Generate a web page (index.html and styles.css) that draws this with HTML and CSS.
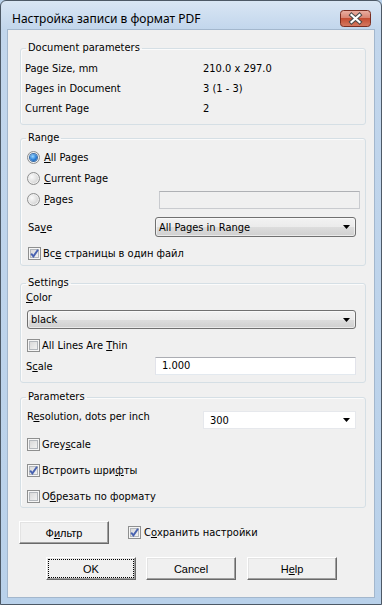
FILE: index.html
```html
<!DOCTYPE html>
<html>
<head>
<meta charset="utf-8">
<title>Настройка записи в формат PDF</title>
<link rel="stylesheet" href="styles.css">
</head>
<body>
<div class="window">

	<div class="titlebar">
		<span class="title">Настройка записи в формат PDF</span>
		<svg class="close" width="31" height="17" viewBox="0 0 31 17">
			<defs>
				<linearGradient id="closeGrad" x1="0" y1="0" x2="0" y2="1">
					<stop offset="0" stop-color="#eab0a4"/>
					<stop offset="0.45" stop-color="#d98573"/>
					<stop offset="0.5" stop-color="#c44d33"/>
					<stop offset="1" stop-color="#d57b63"/>
				</linearGradient>
			</defs>
			<rect x="0.5" y="0.5" width="30" height="16" rx="3" fill="url(#closeGrad)" stroke="#7a2e22"/>
			<path d="M11.5 5 L19.5 12 M19.5 5 L11.5 12" stroke="#4a4a4a" stroke-width="4.2" stroke-linecap="square"/>
			<path d="M11.5 5 L19.5 12 M19.5 5 L11.5 12" stroke="#ffffff" stroke-width="2.2" stroke-linecap="square"/>
		</svg>
	</div>

	<div class="client">

		<!-- document info -->
		<fieldset class="group group-doc">
			<legend>Document parameters</legend>
			<div class="info-row"><span>Page Size, mm</span><span>210.0 x 297.0</span></div>
			<div class="info-row"><span>Pages in Document</span><span>3 (1 - 3)</span></div>
			<div class="info-row"><span>Current Page</span><span>2</span></div>
		</fieldset>

		<!-- range -->
		<fieldset class="group group-range">
			<legend>Range</legend>
			<div class="radio-row"><span class="rb checked"><span class="dot"></span></span><span><u>A</u>ll Pages</span></div>
			<div class="radio-row"><span class="rb"></span><span><u>C</u>urrent Page</span></div>
			<div class="radio-row pages-row">
				<div class="radio-cell"><span class="rb"></span><span><u>P</u>ages</span></div>
				<div class="textbox disabled"></div>
			</div>
			<div class="field-row save-row">
				<span class="field-label">Sa<u>v</u>e</span>
				<div class="combo"><span>All Pages in Range</span><svg class="arrow" width="7" height="4" viewBox="0 0 7 4"><path d="M0 0H7L3.5 4Z"/></svg></div>
			</div>
			<div class="check-row one-file"><span class="cb"><svg width="11" height="11" viewBox="0 0 11 11"><path d="M2.2 5.6 L4.4 8.4 L9 1.8" fill="none" stroke="#4862b0" stroke-width="1.9"/></svg></span><span>Вс<u>е</u> страницы в один файл</span></div>
		</fieldset>

		<!-- settings -->
		<fieldset class="group group-settings">
			<legend>Settings</legend>
			<div class="color-label"><u>C</u>olor</div>
			<div class="combo wide"><span>black</span><svg class="arrow" width="7" height="4" viewBox="0 0 7 4"><path d="M0 0H7L3.5 4Z"/></svg></div>
			<div class="check-row thin-row"><span class="cb"></span><span>All Lines Are <u>T</u>hin</span></div>
			<div class="field-row scale-row">
				<span class="field-label">S<u>c</u>ale</span>
				<div class="textbox">1.000</div>
			</div>
		</fieldset>

		<!-- parameters -->
		<fieldset class="group group-params">
			<legend>Parameters</legend>
			<div class="res-row">
				<span class="res-label">R<u>e</u>solution, dots per inch</span>
				<div class="combo edit"><span>300</span><svg class="arrow" width="7" height="4" viewBox="0 0 7 4"><path d="M0 0H7L3.5 4Z"/></svg></div>
			</div>
			<div class="check-row param-check first"><span class="cb"></span><span>Grey<u>s</u>cale</span></div>
			<div class="check-row param-check"><span class="cb"><svg width="11" height="11" viewBox="0 0 11 11"><path d="M2.2 5.6 L4.4 8.4 L9 1.8" fill="none" stroke="#4862b0" stroke-width="1.9"/></svg></span><span>Встроить шри<u>ф</u>ты</span></div>
			<div class="check-row param-check"><span class="cb"></span><span>О<u>б</u>резать по формату</span></div>
		</fieldset>

		<div class="filter-row">
			<div class="btn">Ф<u>и</u>льтр</div>
			<div class="check-row save-check"><span class="cb"><svg width="11" height="11" viewBox="0 0 11 11"><path d="M2.2 5.6 L4.4 8.4 L9 1.8" fill="none" stroke="#4862b0" stroke-width="1.9"/></svg></span><span>С<u>о</u>хранить настройки</span></div>
		</div>

		<div class="button-row">
			<div class="btn default">OK</div>
			<div class="btn">Cancel</div>
			<div class="btn help">H<u>e</u>lp</div>
		</div>

	</div>
</div>
</body>
</html>
```
FILE: styles.css
```css
*{
	box-sizing: border-box;
}
html, body{
	margin:0;
	padding:0;
}
body{
	font-family: "DejaVu Sans Condensed", "DejaVu Sans", sans-serif;
	font-size: 11px;
	color: #000;
	background: #b9d1ea;
}
u{
	text-decoration-thickness: 1px;
	text-underline-offset: 1px;
}

/* window frame */
.window{
	width: 382px;
	height: 605px;
	border: 1px solid #4d5966;
	border-radius: 6px 6px 0 0;
	background: linear-gradient(#d9e6f4, #c2d6ec 28px, #b9d1ea);
	display: flex;
	flex-direction: column;
	padding: 0 6px 6px 6px;
}
.titlebar{
	height: 28px;
	flex: none;
	display: flex;
	align-items: flex-start;
	padding: 9px 4px 0 5px;
}
.title{
	font-family: "Noto Sans", "Open Sans", sans-serif;
	font-size: 12px;
	line-height: 16px;
	margin-top: 1px;
}
.close{
	margin-left: auto;
	display: block;
}
.client{
	flex: 1;
	background: #f0f0f0;
	border: 1px solid #a3b7cd;
	padding: 0 8px 0 12px;
}

/* group boxes */
.group{
	margin: 11px 0 0 0;
	padding: 3px 9px 6px 4px;
	border: 1px solid #d5dfe5;
	border-radius: 3px;
	box-shadow: inset 1px 1px #fbfbfb;
	min-width: 0;
}
.group legend{
	padding: 0 2px;
	margin-left: 1px;
	line-height: 14px;
}
.group-range{ margin-top: 6px; padding: 2px 9px 2px 4px; }
.group-settings{ margin-top: 10px; padding: 0 9px 7px 4px; }
.group-params{ margin-top: 7px; padding: 7px 9px 1px 4px; }

.info-row{
	display: grid;
	grid-template-columns: 178px 1fr;
	height: 20px;
	align-items: center;
}

/* radios */
.radio-row, .radio-cell{
	display: flex;
	align-items: center;
	height: 21px;
	padding-left: 2px;
	gap: 4px;
}
.pages-row{
	display: grid;
	grid-template-columns: 130px 201px;
	padding-left: 0;
}
.radio-cell{
	padding-left: 2px;
}
.rb{
	width: 13px;
	height: 13px;
	flex: none;
	border-radius: 50%;
	border: 1px solid #8e8f8f;
	background: radial-gradient(circle at 35% 35%, #fbfbfb, #cfcfcf 80%);
	box-shadow: inset 0 0 0 1px #f0f0f0;
	display: flex;
	align-items: center;
	justify-content: center;
}
.rb .dot{
	width: 7px;
	height: 7px;
	border-radius: 50%;
	background: radial-gradient(circle at 40% 35%, #9ad8ff, #2a7fd8 55%, #0c4c9e);
	box-shadow: 0 0 0 1px #3a6ea8;
}

/* checkboxes */
.check-row{
	display: flex;
	align-items: center;
	gap: 2px;
	height: 20px;
	padding-left: 2px;
}
.cb{
	width: 13px;
	height: 13px;
	flex: none;
	border: 1px solid #8e8f8f;
	background: linear-gradient(135deg, #d3d3d3, #f8f8f8);
	box-shadow: inset 0 0 0 1px #f6f6f6, inset 0 0 0 2px #b3b7bc;
	display: flex;
	align-items: center;
	justify-content: center;
}
.cb svg{
	display: block;
}
.one-file{
	margin-top: 6px;
	padding-left: 3px;
}
.thin-row{
	margin-top: 6px;
}
.param-check{
	margin-top: 6px;
}
.param-check.first{
	margin-top: 5px;
}

/* label + control rows */
.field-row{
	display: grid;
	grid-template-columns: 130px 201px;
	align-items: center;
}
.save-row{
	margin-top: 7px;
	height: 20px;
}
.save-row .field-label{
	padding-left: 3px;
}
.scale-row{
	margin-top: 2px;
	height: 18px;
}
.scale-row .field-label{
	padding-left: 1px;
}
.color-label{
	line-height: 16px;
	padding-left: 1px;
}
.res-row{
	display: grid;
	grid-template-columns: 178px 153px;
	align-items: start;
	height: 18px;
}
.res-label{
	line-height: 12px;
	padding-left: 2px;
}

/* inputs */
.textbox{
	height: 18px;
	background: #fff;
	border: 1px solid #e2e3ea;
	border-top-color: #abadb3;
	border-bottom-color: #e3e9ef;
	padding-left: 6px;
	line-height: 16px;
}
.textbox.disabled{
	background: #f0f0f0;
	border-color: #c9cbcf;
	border-top-color: #afb1b5;
}
.combo{
	height: 20px;
	border: 1px solid #707070;
	border-radius: 3px;
	background: linear-gradient(#f2f2f2, #ebebeb 50%, #dddddd 50%, #cfcfcf);
	box-shadow: inset 0 0 0 1px rgba(255,255,255,0.55);
	display: flex;
	align-items: center;
	padding-left: 3px;
}
.combo.wide{
	margin-top: 4px;
	margin-left: 2px;
	height: 19px;
}
.combo.edit{
	height: 18px;
	border: 1px solid #e6e8ec;
	border-radius: 0;
	background: #fff;
	box-shadow: none;
	padding-left: 6px;
}
.arrow{
	margin-left: auto;
	margin-right: 5px;
	display: block;
}

/* buttons */
.filter-row{
	display: flex;
	align-items: center;
	margin: 13px 0 0 -1px;
	gap: 19px;
}
.save-check{
	gap: 3px;
	padding-left: 0;
}
.button-row{
	display: flex;
	gap: 10px;
	margin-top: 13px;
	padding-left: 26px;
}
.btn{
	width: 90px;
	height: 23px;
	font-family: "Liberation Sans", Arial, sans-serif;
	font-size: 11px;
	background: #f0f0f0;
	border: 1px solid;
	border-color: #ffffff #696969 #696969 #ffffff;
	box-shadow: inset -1px -1px #a0a0a0, inset 1px 1px #e3e3e3;
	display: flex;
	align-items: center;
	justify-content: center;
}
.btn.default{
	outline: 1px dotted #000;
	outline-offset: -3px;
}
.btn.help{
	margin-left: 1px;
}
```
